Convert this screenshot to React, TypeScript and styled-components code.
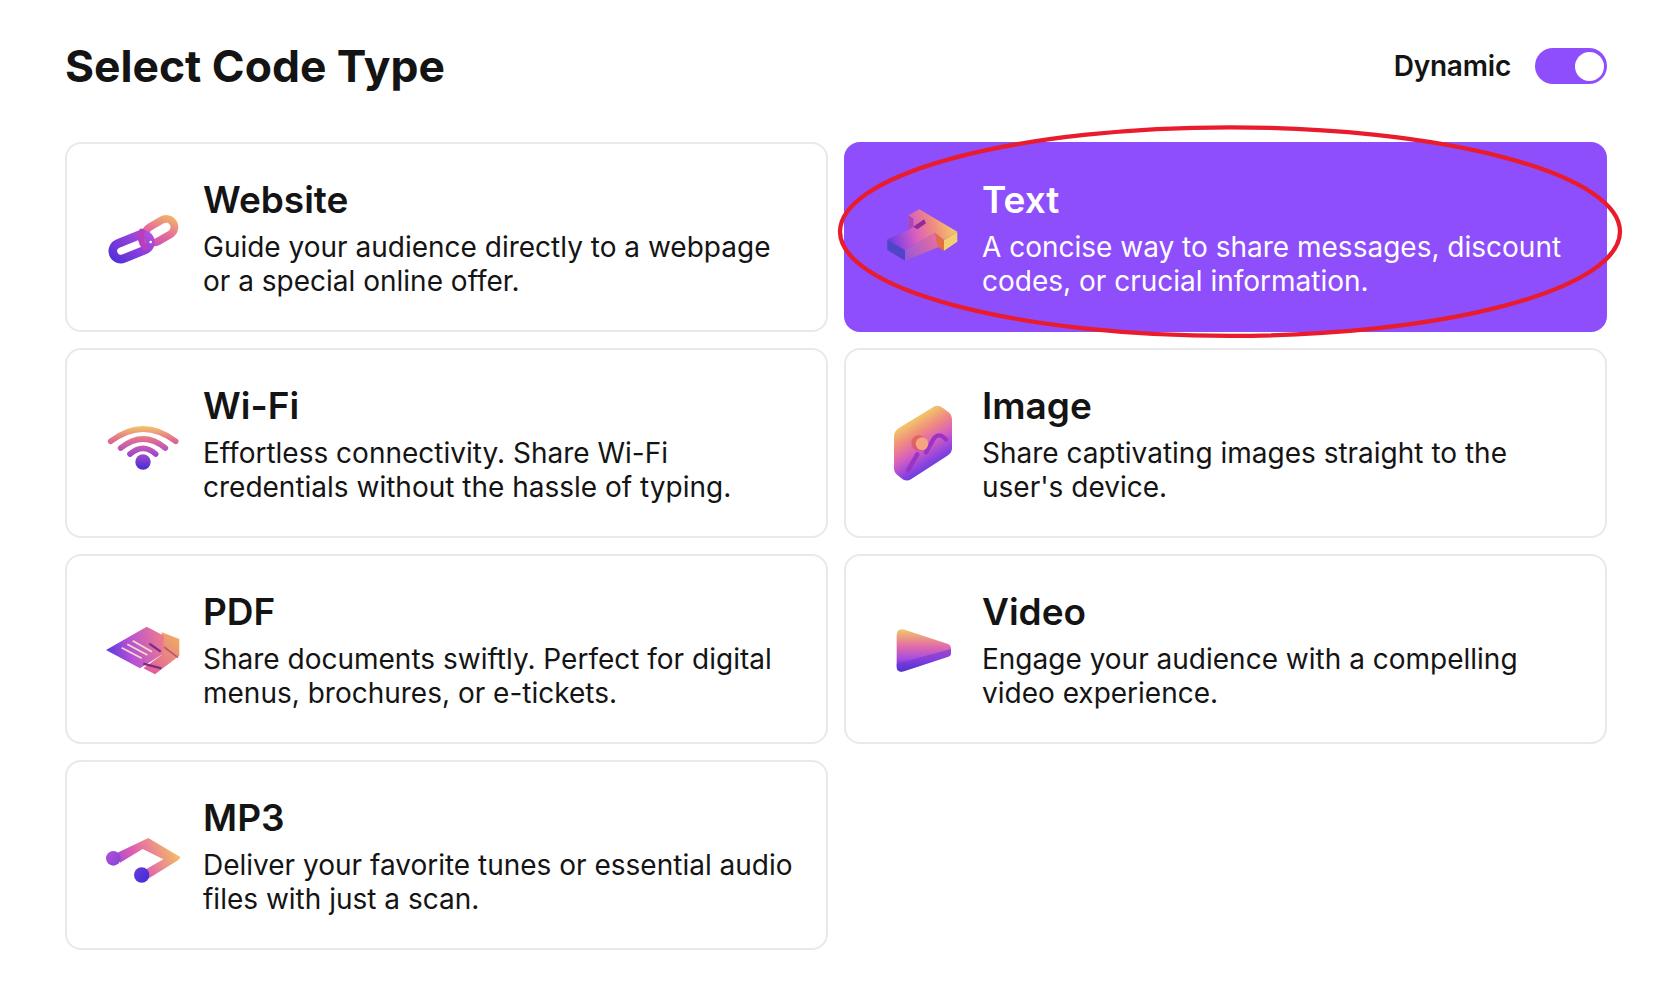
import React from "react";
import styled, { createGlobalStyle } from "styled-components";

const Global = createGlobalStyle`
  html, body { margin: 0; padding: 0; background: #fff; }
  body { font-family: Inter, "Liberation Sans", sans-serif; color: #141414; }
`;

const Page = styled.main`
  box-sizing: border-box;
  width: 1667px;
  height: 990px;
  padding: 36px 60px 0 65px;
`;

const Header = styled.header`
  display: flex;
  align-items: center;
  justify-content: space-between;
  height: 60px;
  margin-bottom: 46px;
`;

const Title = styled.h1`
  margin: 0;
  font-size: 44.4px;
  line-height: 60px;
  font-weight: 700;
`;

const ToggleRow = styled.div`
  display: flex;
  align-items: center;
  gap: 24px;
`;

const ToggleLabel = styled.span`
  font-size: 28px;
  font-weight: 600;
  letter-spacing: -0.2px;
`;

const Toggle = styled.div`
  display: flex;
  align-items: center;
  justify-content: flex-end;
  box-sizing: border-box;
  width: 72px;
  height: 36px;
  padding-right: 3px;
  border-radius: 18px;
  background: #8f4efb;
`;

const Knob = styled.div`
  width: 29px;
  height: 29px;
  border-radius: 50%;
  background: #fff;
`;

const Grid = styled.div`
  display: grid;
  grid-template-columns: repeat(2, 763px);
  grid-auto-rows: 190px;
  gap: 16px;
`;

const Card = styled.div<{ $active?: boolean }>`
  position: relative;
  box-sizing: border-box;
  display: flex;
  align-items: center;
  gap: 20px;
  padding: 0 30px 0 36px;
  border: 2px solid ${(p) => (p.$active ? "#8f4efb" : "#e9e9e9")};
  border-radius: 16px;
  background: ${(p) => (p.$active ? "#8f4efb" : "#fff")};
  color: ${(p) => (p.$active ? "#fff" : "#141414")};
`;

const IconBox = styled.svg`
  flex: none;
  width: 80px;
  height: 80px;
`;

const Body = styled.div`
  display: flex;
  flex-direction: column;
  margin-top: 2px;
`;

const CardTitle = styled.h2`
  margin: 0 0 8px;
  font-size: 37px;
  line-height: 44px;
  font-weight: 600;
`;

const CardText = styled.p`
  margin: 0;
  font-size: 28px;
  line-height: 34px;
  font-weight: 400;
`;

const Scribble = styled.svg`
  position: absolute;
  left: -8px;
  top: -17px;
  width: 787px;
  height: 214px;
  overflow: visible;
  pointer-events: none;
`;

const stops = ["#4a35d6", "#8e44e0", "#d85fc0", "#ef8a80", "#f2c46a"];

function Grad({ id, x1, y1, x2, y2 }: { id: string; x1: number; y1: number; x2: number; y2: number }) {
  return (
    <linearGradient id={id} gradientUnits="userSpaceOnUse" x1={x1} y1={y1} x2={x2} y2={y2}>
      {stops.map((c, i) => (
        <stop key={c} offset={i / (stops.length - 1)} stopColor={c} />
      ))}
    </linearGradient>
  );
}

const WebsiteIcon = () => (
  <IconBox viewBox="39 21 240 240">
    <defs>
      <linearGradient id="w1" gradientUnits="userSpaceOnUse" x1="60" y1="200" x2="180" y2="135">
        <stop offset="0" stopColor="#4f30d8" />
        <stop offset="0.6" stopColor="#8e3fdc" />
        <stop offset="1" stopColor="#b34fd8" />
      </linearGradient>
      <linearGradient id="w2" gradientUnits="userSpaceOnUse" x1="150" y1="170" x2="255" y2="80">
        <stop offset="0" stopColor="#b83ec0" />
        <stop offset="0.5" stopColor="#e56a9c" />
        <stop offset="1" stopColor="#f2c060" />
      </linearGradient>
    </defs>
    <rect x="164" y="97" width="92" height="50" rx="25" transform="rotate(-30 210 122)" fill="none" stroke="url(#w2)" strokeWidth="23" />
    <rect x="66" y="146" width="118" height="48" rx="24" transform="rotate(-22 125 170)" fill="none" stroke="url(#w1)" strokeWidth="26" />
    <path d="M155 125 Q146 150 165 172" fill="none" stroke="#b83ec0" strokeWidth="18" strokeLinecap="round" />
    <circle cx="182" cy="156" r="4" fill="#fff" />
  </IconBox>
);

const TextIcon = () => (
  <IconBox viewBox="36 21 240 240">
    <defs>
      <Grad id="t1" x1={30} y1={170} x2={245} y2={105} />
      <linearGradient id="t2" gradientUnits="userSpaceOnUse" x1="105" y1="200" x2="205" y2="140">
        <stop offset="0" stopColor="#9a58d8" />
        <stop offset="1" stopColor="#ea6f9a" />
      </linearGradient>
    </defs>
    <path d="M52 148 L105 180 L105 212 L52 180 Z" fill="#4f45c8" />
    <path d="M105 180 L195 128 L205 172 L105 212 Z" fill="url(#t2)" />
    <path d="M195 128 L222 150 L222 182 L205 172 Z" fill="#e2703f" />
    <path d="M222 150 L262 125 L262 155 L222 182 Z" fill="#f4ce72" />
    <path d="M148 58 L262 125 L222 150 L195 128 L105 180 L52 148 L115 120 L115 75 Z" fill="url(#t1)" />
    <path d="M115 75 L130 86 L130 110 L115 120 Z" fill="#a848b8" />
    <path d="M130 110 L162 88 L168 100 L142 118 Z" fill="#8f2a96" />
  </IconBox>
);

const WifiIcon = () => (
  <IconBox viewBox="39 9 240 240">
    <defs>
      <linearGradient id="f1" gradientUnits="userSpaceOnUse" x1="160" y1="80" x2="160" y2="205">
        <stop offset="0" stopColor="#f2c46a" />
        <stop offset="0.3" stopColor="#e4708f" />
        <stop offset="0.6" stopColor="#b04cc8" />
        <stop offset="1" stopColor="#4a30d4" />
      </linearGradient>
    </defs>
    <g fill="none" stroke="url(#f1)" strokeWidth="17" strokeLinecap="round">
      <path d="M62 124 Q160 50 257 124" />
      <path d="M92 144 Q160 90 226 144" />
      <path d="M120 162 Q160 128 197 162" />
    </g>
    <circle cx="159" cy="186" r="23" fill="url(#f1)" />
  </IconBox>
);

const ImageIcon = () => (
  <IconBox viewBox="36 24 240 240">
    <defs>
      <Grad id="i1" x1={195} y1={235} x2={105} y2={90} />
    </defs>
    <path
      d="M88 98 L190 36 Q204 28 218 38 L236 52 Q246 60 246 76 L246 160 Q246 174 232 182 L124 252 Q108 262 94 250 L82 240 Q72 232 72 220 L72 124 Q72 108 88 98 Z"
      fill="url(#i1)"
    />
    <path d="M114 226 L142 178 M168 172 L192 130 Q208 110 228 134" fill="none" stroke="#9a34c4" strokeWidth="13" strokeLinecap="round" />
    <circle cx="147" cy="144" r="23" fill="#d9503a" opacity="0.55" />
    <circle cx="156" cy="146" r="19" fill="#f5a580" />
  </IconBox>
);

const PdfIcon = () => (
  <IconBox viewBox="39 12 240 240">
    <defs>
      <linearGradient id="p1" gradientUnits="userSpaceOnUse" x1="50" y1="140" x2="220" y2="100">
        <stop offset="0" stopColor="#5a3ae0" />
        <stop offset="0.4" stopColor="#b450d8" />
        <stop offset="1" stopColor="#ee7a8e" />
      </linearGradient>
      <linearGradient id="p2" gradientUnits="userSpaceOnUse" x1="170" y1="200" x2="265" y2="90">
        <stop offset="0" stopColor="#e05aa0" />
        <stop offset="1" stopColor="#f0b060" />
      </linearGradient>
    </defs>
    <path d="M215 82 L268 102 L268 152 L195 208 L160 190 L215 150 Z" fill="url(#p2)" />
    <path d="M222 126 L264 158" fill="none" stroke="#a83a70" strokeWidth="5" opacity="0.7" />
    <path d="M48 135 L170 65 L222 92 L218 148 L150 190 Z" fill="url(#p1)" />
    <path d="M178 116 L212 140 M160 176 L214 190" stroke="#7d2a80" strokeWidth="7" />
    <path d="M95 128 L155 160 M112 118 L172 150 M128 107 L186 140" stroke="#f6dcc8" strokeWidth="5" />
  </IconBox>
);

const VideoIcon = () => (
  <IconBox viewBox="36 12 240 240">
    <defs>
      <linearGradient id="v1" gradientUnits="userSpaceOnUse" x1="130" y1="75" x2="130" y2="195">
        <stop offset="0" stopColor="#f2c46a" />
        <stop offset="0.4" stopColor="#e26ea6" />
        <stop offset="0.72" stopColor="#a64ce0" />
        <stop offset="1" stopColor="#4030d0" />
      </linearGradient>
    </defs>
    <path
      d="M80 92 Q80 68 104 74 L232 116 Q243 120 243 130 L243 146 Q243 152 232 156 L104 198 Q80 206 80 184 Z"
      fill="url(#v1)"
    />
    <path d="M80 176 L243 132 L243 146 Q243 152 232 156 L104 198 Q80 206 80 184 Z" fill="#6b35d8" opacity="0.55" />
  </IconBox>
);

const Mp3Icon = () => (
  <IconBox viewBox="39 15 240 240">
    <defs>
      <linearGradient id="m1" gradientUnits="userSpaceOnUse" x1="70" y1="190" x2="240" y2="100">
        <stop offset="0" stopColor="#8e44e0" />
        <stop offset="0.45" stopColor="#e25fb0" />
        <stop offset="1" stopColor="#f2b86a" />
      </linearGradient>
      <linearGradient id="m2" gradientUnits="userSpaceOnUse" x1="60" y1="130" x2="170" y2="215">
        <stop offset="0" stopColor="#a84ed8" />
        <stop offset="1" stopColor="#4030d8" />
      </linearGradient>
    </defs>
    <path d="M82 128 L175 84 L272 142 L262 152 L172 208 L160 182 L220 148 L158 117 L90 158 Z" fill="url(#m1)" />
    <circle cx="70" cy="145" r="22" fill="url(#m2)" />
    <circle cx="155" cy="195" r="23" fill="url(#m2)" />
  </IconBox>
);

const items = [
  { title: "Website", text: "Guide your audience directly to a webpage or a special online offer.", Icon: WebsiteIcon },
  { title: "Text", text: "A concise way to share messages, discount codes, or crucial information.", Icon: TextIcon, active: true },
  { title: "Wi-Fi", text: "Effortless connectivity. Share Wi-Fi credentials without the hassle of typing.", Icon: WifiIcon },
  { title: "Image", text: "Share captivating images straight to the user's device.", Icon: ImageIcon },
  { title: "PDF", text: "Share documents swiftly. Perfect for digital menus, brochures, or e-tickets.", Icon: PdfIcon },
  { title: "Video", text: "Engage your audience with a compelling video experience.", Icon: VideoIcon },
  { title: "MP3", text: "Deliver your favorite tunes or essential audio files with just a scan.", Icon: Mp3Icon },
];

export default function App() {
  return (
    <Page>
      <Global />
      <Header>
        <Title>Select Code Type</Title>
        <ToggleRow>
          <ToggleLabel>Dynamic</ToggleLabel>
          <Toggle>
            <Knob />
          </Toggle>
        </ToggleRow>
      </Header>
      <Grid>
        {items.map(({ title, text, Icon, active }) => (
          <Card key={title} $active={active}>
            <Icon />
            <Body>
              <CardTitle>{title}</CardTitle>
              <CardText>{text}</CardText>
            </Body>
            {active && (
              <Scribble viewBox="0 0 787 214">
                <ellipse cx="392" cy="104.6" rx="390" ry="104.3" fill="none" stroke="#e81c2c" strokeWidth="4.3" />
              </Scribble>
            )}
          </Card>
        ))}
      </Grid>
    </Page>
  );
}
